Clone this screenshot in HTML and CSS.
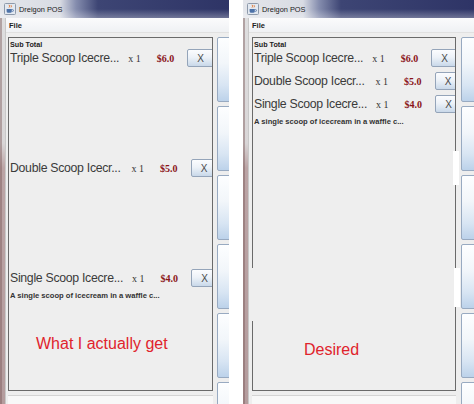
FILE: index.html
```html
<!DOCTYPE html>
<html lang="en">
<head>
<meta charset="utf-8">
<title>Dreigon POS</title>
<link rel="stylesheet" href="styles.css">
</head>
<body>
<div class="screen">
  <section class="window win-left">
    <div class="titlebar">
      <svg class="app-icon" width="12" height="12" viewBox="0 0 12 12"><rect x="0.5" y="0.5" width="11" height="11" rx="1" fill="#e3e9f1" stroke="#8e9aab"/><path d="M5 1.8q1.4 1.4 0 2.8M7 2.2q1 1 0 2.2" fill="none" stroke="#e0702a" stroke-width="0.9"/><path d="M2.6 6h5.2v2.2a1.6 1.6 0 0 1-1.6 1.6H4.2a1.6 1.6 0 0 1-1.6-1.6z" fill="#4d72a8"/><path d="M7.8 6.6h0.8a0.9 0.9 0 0 1 0 1.8h-0.8" fill="none" stroke="#4d72a8" stroke-width="0.8"/></svg>
      <span class="title">Dreigon POS</span>
    </div>
    <div class="frame-body">
      <div class="frame-edge"></div>
      <div class="content">
        <div class="menubar"><span class="menu">File</span></div>
        <div class="client">
          <div class="panel-col">
            <div class="panel">
              <div class="subtotal">Sub Total</div>
              <div class="item tall">
                <div class="row"><span class="name">Triple Scoop Icecre...</span><span class="qty">x 1</span><span class="price">$6.0</span><span class="remove">X</span></div>
              </div>
              <div class="item tall">
                <div class="row"><span class="name">Double Scoop Icecr...</span><span class="qty qty-wide">x 1</span><span class="price">$5.0</span><span class="remove">X</span></div>
              </div>
              <div class="item tall">
                <div class="row"><span class="name">Single Scoop Icecre...</span><span class="qty">x 1</span><span class="price">$4.0</span><span class="remove">X</span></div>
                <div class="desc">A single scoop of icecream in a waffle c...</div>
              </div>
            </div>
            <div class="statusbar"></div>
          </div>
          <div class="side">
            <div class="side-btn"></div><div class="side-btn"></div><div class="side-btn"></div>
            <div class="side-btn"></div><div class="side-btn"></div><div class="side-btn"></div>
          </div>
        </div>
      </div>
    </div>
    <p class="note note-left">What I actually get</p>
  </section>

  <div class="seam"></div>

  <section class="window win-right">
    <div class="titlebar">
      <svg class="app-icon" width="12" height="12" viewBox="0 0 12 12"><rect x="0.5" y="0.5" width="11" height="11" rx="1" fill="#e3e9f1" stroke="#8e9aab"/><path d="M5 1.8q1.4 1.4 0 2.8M7 2.2q1 1 0 2.2" fill="none" stroke="#e0702a" stroke-width="0.9"/><path d="M2.6 6h5.2v2.2a1.6 1.6 0 0 1-1.6 1.6H4.2a1.6 1.6 0 0 1-1.6-1.6z" fill="#4d72a8"/><path d="M7.8 6.6h0.8a0.9 0.9 0 0 1 0 1.8h-0.8" fill="none" stroke="#4d72a8" stroke-width="0.8"/></svg>
      <span class="title">Dreigon POS</span>
    </div>
    <div class="frame-body">
      <div class="frame-edge"></div>
      <div class="content">
        <div class="menubar"><span class="menu">File</span></div>
        <div class="client client-right">
          <div class="panel-col">
            <div class="panel">
              <div class="subtotal">Sub Total</div>
              <div class="item compact">
                <div class="row"><span class="name">Triple Scoop Icecre...</span><span class="qty">x 1</span><span class="price">$6.0</span><span class="remove">X</span></div>
              </div>
              <div class="item compact">
                <div class="row"><span class="name">Double Scoop Icecr...</span><span class="qty qty-wide">x 1</span><span class="price">$5.0</span><span class="remove">X</span></div>
              </div>
              <div class="item compact">
                <div class="row"><span class="name">Single Scoop Icecre...</span><span class="qty">x 1</span><span class="price">$4.0</span><span class="remove">X</span></div>
                <div class="desc">A single scoop of icecream in a waffle c...</div>
              </div>
            </div>
            <div class="statusbar"></div>
          </div>
          <div class="side">
            <div class="side-btn"></div><div class="side-btn"></div><div class="side-btn"></div>
            <div class="side-btn"></div><div class="side-btn"></div><div class="side-btn"></div>
          </div>
        </div>
      </div>
    </div>
    <div class="glitch glitch-a"></div>
    <div class="glitch glitch-b"></div>
    <div class="glitch glitch-c"></div>
    <p class="note note-right">Desired</p>
  </section>
</div>
</body>
</html>
```

FILE: styles.css
```css
* { box-sizing: border-box; }
html, body { margin: 0; padding: 0; }
body {
  width: 474px;
  height: 404px;
  overflow: hidden;
  background: #ffffff;
  font-family: "Liberation Sans", Arial, sans-serif;
}
.screen { display: flex; height: 404px; }
.window {
  position: relative;
  display: flex;
  flex-direction: column;
  height: 404px;
  overflow: hidden;
  background: #eeeeee;
  flex-shrink: 0;
}
.win-left { width: 229px; }
.seam { width: 14px; background: #ffffff; flex-shrink: 0; }
.win-right { width: 231px; }

.titlebar {
  height: 18px;
  flex-shrink: 0;
  display: flex;
  align-items: center;
  gap: 3px;
  padding-left: 4px;
  background:
    linear-gradient(to bottom, rgba(255,255,255,0) 50%, rgba(255,255,255,0.3) 100%),
    linear-gradient(to right, #e4e6eb 0, #d8dbe3 60px, #858dae 76px, #3d4574 98px, #2e3466 100%);
}
.app-icon { display: block; flex-shrink: 0; }
.title { font-size: 7.4px; color: #1b1b1b; }

.frame-body { flex: 1; display: flex; min-height: 0; }
.frame-edge {
  width: 6px;
  flex-shrink: 0;
  background: linear-gradient(to bottom, #dededf 0, #d9d6d7 125px, #bba4a5 150px, #b49c9d 100%);
  box-shadow: inset -1px 0 #c8c8c8, inset 2px 0 rgba(125, 90, 92, 0.45);
}
.content { flex: 1; display: flex; flex-direction: column; min-width: 0; }
.menubar {
  height: 15px;
  flex-shrink: 0;
  display: flex;
  align-items: center;
  padding-left: 3px;
  background: linear-gradient(#fbfbfc, #eff1f4);
  border-bottom: 1px solid #e1e1e1;
}
.menu { font-size: 7.5px; font-weight: bold; color: #222222; }

.client { flex: 1; display: flex; padding: 4px 0 0 2px; }
.client-right { padding-left: 3px; }
.panel-col { width: 205px; flex-shrink: 0; display: flex; flex-direction: column; }
.client-right .panel-col { width: 204px; }
.panel {
  height: 354px;
  border: 1px solid #6a6a6a;
  background: #eeeeee;
  overflow: hidden;
  padding-left: 1px;
}
.statusbar {
  margin-top: 4px;
  height: 12px;
  background: #f8f8f8;
  border-top: 1px solid #d4d4d4;
}
.subtotal {
  height: 11px;
  padding-top: 2px;
  font-size: 7.2px;
  line-height: 9px;
  font-weight: bold;
  color: #222222;
}
.item.tall { height: 110px; }
.item.compact { height: 23px; }
.row { display: flex; align-items: center; height: 18px; white-space: nowrap; }
.name {
  flex-shrink: 0;
  font-size: 12.3px;
  letter-spacing: -0.3px;
  color: #3b3b3b;
}
.qty {
  flex-shrink: 0;
  margin-left: 9px;
  font-family: "Liberation Serif", "Times New Roman", serif;
  font-size: 10px;
  color: #333333;
}
.qty-wide { margin-left: 11px; }
.price {
  flex-shrink: 0;
  margin-left: 16px;
  font-family: "Liberation Serif", "Times New Roman", serif;
  font-size: 10px;
  font-weight: bold;
  color: #8a1418;
}
.remove {
  flex-shrink: 0;
  margin-left: 13px;
  width: 27px;
  height: 18px;
  display: flex;
  align-items: center;
  justify-content: center;
  border: 1px solid #94a4b9;
  border-radius: 2px;
  background: linear-gradient(#fbfcfe, #edf2f8 45%, #d6e2ef 80%, #c9d8e9);
  font-size: 10px;
  color: #4a4a4a;
}
.desc {
  margin-top: 4px;
  font-size: 7.6px;
  line-height: 10px;
  font-weight: bold;
  color: #333333;
  white-space: nowrap;
}

.side {
  margin-left: 4px;
  width: 22px;
  flex-shrink: 0;
  display: flex;
  flex-direction: column;
  gap: 4px;
}
.client-right .side { margin-left: 5px; }
.side-btn {
  height: 65px;
  flex-shrink: 0;
  border: 1px solid #98aac1;
  border-radius: 2px;
  background: linear-gradient(#fdfeff 0, #f2f6fa 40%, #d8e5f3 75%, #bcd2ea 100%);
}

.note {
  position: absolute;
  margin: 0;
  font-size: 16px;
  line-height: 16px;
  color: #e0232c;
  white-space: nowrap;
}
.note-left { left: 36px; top: 336px; }
.note-right { left: 61px; top: 342px; }

.glitch { position: absolute; }
.glitch-a { left: 210px; top: 151px; width: 6px; height: 34px; background: #ffffff; }
.glitch-b { left: 211px; top: 268px; width: 6px; height: 39px; background: #ffffff; }
.glitch-c { left: 8px; top: 268px; width: 2px; height: 53px; background: #eeeeee; }
```
